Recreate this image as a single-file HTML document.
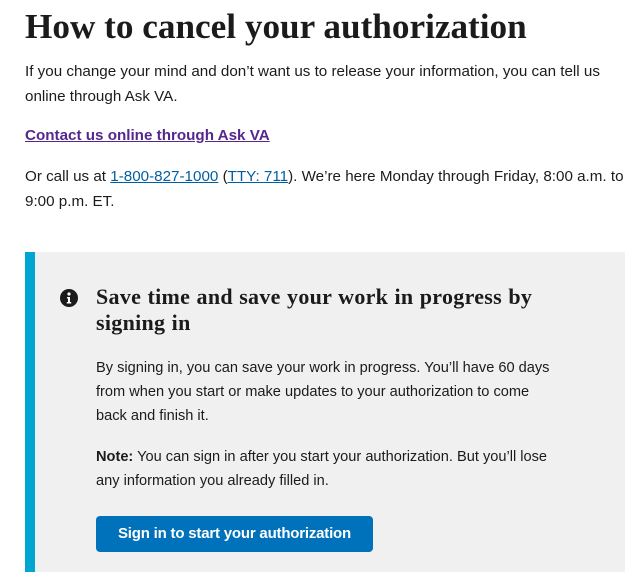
<!DOCTYPE html>
<html><head><style>
body{margin:0;background:#fff;width:639px;height:562px;overflow:hidden;font-family:"Liberation Sans",sans-serif;color:#1b1b1b}
.p{position:absolute;left:25px;font-size:15.2px;line-height:24.5px;margin:0;white-space:nowrap}
h1{position:absolute;left:25px;top:5px;margin:0;font-family:"Liberation Serif",serif;font-weight:bold;font-size:35.2px;letter-spacing:0px;line-height:44px}
a{color:#005ea2}
.box{position:absolute;left:25px;top:252px;width:600px;height:320px;background:#f0f0f0;border-left:10px solid #00a6d2;box-sizing:border-box}
h2{position:absolute;left:96px;top:284px;margin:0;font-family:"Liberation Serif",serif;font-weight:bold;font-size:22px;letter-spacing:0.3px;word-spacing:0.5px;line-height:26px}
.btn{position:absolute;left:96px;top:516px;width:277px;height:36px;background:#0071bb;border-radius:4px;color:#fff;font-weight:bold;font-size:15px;line-height:36px;text-align:center;letter-spacing:-0.2px}
</style></head><body>
<h1>How to cancel your authorization</h1>
<p class="p" style="top:60px">If you change your mind and don’t want us to release your information, you can tell us<br>online through Ask VA.</p>
<p class="p" style="top:124px"><a href="#" style="color:#54278f;font-weight:bold">Contact us online through Ask VA</a></p>
<p class="p" style="top:165px">Or call us at <a href="#">1-800-827-1000</a> (<a href="#">TTY: 711</a>). We’re here Monday through Friday, 8:00 a.m. to<br>9:00 p.m. ET.</p>
<div class="box"></div>
<svg style="position:absolute;left:60px;top:289px" width="18" height="18" viewBox="0 0 18 18"><circle cx="9" cy="9" r="9" fill="#1b1b1b"/><circle cx="9" cy="5" r="1.6" fill="#fff"/><path d="M7 8h3v5h1.2v1.5H6.8V13H8v-3.5H7z" fill="#fff"/></svg>
<h2>Save time and save your work in progress by<br>signing in</h2>
<p class="p" style="left:96px;top:356px;line-height:24px;font-size:14.6px">By signing in, you can save your work in progress. You’ll have 60 days<br>from when you start or make updates to your authorization to come<br>back and finish it.</p>
<p class="p" style="left:96px;top:445px;line-height:24px;font-size:14.6px"><b>Note:</b> You can sign in after you start your authorization. But you’ll lose<br>any information you already filled in.</p>
<div class="btn">Sign in to start your authorization</div>
</body></html>
